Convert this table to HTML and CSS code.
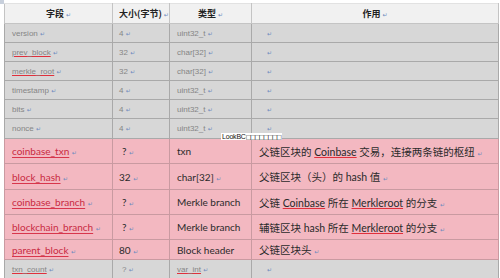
FILE: index.html
```html
<!DOCTYPE html>
<html lang="zh">
<head>
<meta charset="utf-8">
<link rel="stylesheet" href="styles.css">
</head>
<body>
<div class="handle"></div>
<table class="tbl">
  <colgroup>
    <col class="c1"><col class="c2"><col class="c3"><col class="c4">
  </colgroup>
  <thead>
    <tr class="head">
      <th>字段 <span class="pm">↵</span></th>
      <th class="left">大小(字节) <span class="pm">↵</span></th>
      <th>类型 <span class="pm">↵</span></th>
      <th>作用 <span class="pm">↵</span></th>
    </tr>
  </thead>
  <tbody>
    <tr class="gray">
      <td>version <span class="pm">↵</span></td><td>4 <span class="pm">↵</span></td><td>uint32_t <span class="pm">↵</span></td><td class="ind"><span class="pm">↵</span></td>
    </tr>
    <tr class="gray">
      <td><span class="sp">prev_block</span> <span class="pm">↵</span></td><td>32 <span class="pm">↵</span></td><td>char[32] <span class="pm">↵</span></td><td class="ind"><span class="pm">↵</span></td>
    </tr>
    <tr class="gray">
      <td><span class="sp">merkle_root</span> <span class="pm">↵</span></td><td>32 <span class="pm">↵</span></td><td>char[32] <span class="pm">↵</span></td><td class="ind"><span class="pm">↵</span></td>
    </tr>
    <tr class="gray">
      <td>timestamp <span class="pm">↵</span></td><td>4 <span class="pm">↵</span></td><td>uint32_t <span class="pm">↵</span></td><td class="ind"><span class="pm">↵</span></td>
    </tr>
    <tr class="gray">
      <td>bits <span class="pm">↵</span></td><td>4 <span class="pm">↵</span></td><td>uint32_t <span class="pm">↵</span></td><td class="ind"><span class="pm">↵</span></td>
    </tr>
    <tr class="gray tall">
      <td>nonce <span class="pm">↵</span></td><td>4 <span class="pm">↵</span></td><td>uint32_t <span class="pm">↵</span></td><td class="ind"><span class="pm">↵</span></td>
    </tr>
    <tr class="pink">
      <td><span class="lnk">coinbase_txn</span> <span class="pm">↵</span></td><td class="q">? <span class="pm">↵</span></td><td>txn</td><td class="desc">父链区块的 <span class="sp">Coinbase</span> 交易，连接两条链的枢纽 <span class="pm">↵</span></td>
    </tr>
    <tr class="pink taller">
      <td><span class="lnk">block_hash</span> <span class="pm">↵</span></td><td>32 <span class="pm">↵</span></td><td>char[32] <span class="pm">↵</span></td><td class="desc">父链区块（头）的 hash 值 <span class="pm">↵</span></td>
    </tr>
    <tr class="pink">
      <td><span class="lnk">coinbase_branch</span> <span class="pm">↵</span></td><td class="q">? <span class="pm">↵</span></td><td>Merkle branch</td><td class="desc">父链 <span class="sp">Coinbase</span> 所在 <span class="sp">Merkleroot</span> 的分支 <span class="pm">↵</span></td>
    </tr>
    <tr class="pink">
      <td><span class="lnk">blockchain_branch</span> <span class="pm">↵</span></td><td class="q">? <span class="pm">↵</span></td><td>Merkle branch</td><td class="desc">辅链区块 hash 所在 <span class="sp">Merkleroot</span> 的分支 <span class="pm">↵</span></td>
    </tr>
    <tr class="pink short">
      <td><span class="lnk">parent_block</span> <span class="pm">↵</span></td><td>80 <span class="pm">↵</span></td><td>Block header</td><td class="desc">父链区块头 <span class="pm">↵</span></td>
    </tr>
    <tr class="gray">
      <td><span class="sp">txn_count</span> <span class="pm">↵</span></td><td class="q">? <span class="pm">↵</span></td><td><span class="sp">var_int</span> <span class="pm">↵</span></td><td class="ind"><span class="pm">↵</span></td>
    </tr>
  </tbody>
</table>
<div class="overlay">LookBC<span class="tofu">□□□□□□□□</span></div>
</body>
</html>
```
FILE: styles.css
```css
html, body {
  margin: 0;
  padding: 0;
  background: #ffffff;
  overflow: hidden;
}
body {
  padding: 3px 0 0 4px;
  width: 500px;
  height: 278px;
  box-sizing: border-box;
  position: relative;
  font-family: "Liberation Sans", "Noto Sans CJK SC", sans-serif;
}
.handle {
  position: absolute;
  left: 0;
  top: 0;
  width: 4px;
  height: 4px;
  background: #c8d0dc;
}
.tbl {
  border-collapse: collapse;
  table-layout: fixed;
  width: 494px;
}
.c1 { width: 108px; }
.c2 { width: 57px; }
.c3 { width: 82px; }
.c4 { width: 247px; }
.tbl th, .tbl td {
  padding: 0 0 0 7px;
  white-space: nowrap;
  overflow: hidden;
  vertical-align: middle;
  text-align: left;
}
.head th {
  height: 19px;
  background: #f1f1f1;
  border: 1px solid #c4c4c4;
  border-top-color: #e2e2e2;
  font-family: "Noto Sans CJK SC", "Liberation Sans", sans-serif;
  font-weight: bold;
  font-size: 9px;
  color: #222;
  text-align: center;
  padding: 0;
}
.head th.left {
  text-align: left;
  padding-left: 6px;
}
.gray td {
  height: 18px;
  background: #d7d7d7;
  border: 1px solid #a9a9a9;
  font-size: 8px;
  color: #858585;
}
.gray.tall td { height: 19px; }
.gray td:nth-child(2) { padding-left: 6px; }
.gray td.ind { padding-left: 15px; }
.pink td {
  height: 24px;
  background: #f3b8c1;
  border: 1px solid #c99aa1;
  font-family: "Lato", "Noto Sans CJK SC", sans-serif;
  font-size: 10px;
  color: #2a2a2a;
}
.pink.taller td { height: 25px; }
.pink.short td { height: 19px; }
.pink td:nth-child(2) { padding-left: 6px; }
.pink td.q { padding-left: 9px; }
.gray td.q { padding-left: 9px; }
.pink td.desc {
  font-size: 10.5px;
}
.pm {
  color: #6f8bbf;
  font-family: "DejaVu Sans", sans-serif;
  font-size: 6px;
  font-weight: normal;
}
.sp {
  text-decoration: underline;
  text-decoration-color: #e0303c;
  text-underline-offset: 1px;
}
.lnk {
  color: #c92a42;
  text-decoration: underline;
  text-decoration-color: #d8364c;
  text-underline-offset: 2px;
}
.overlay {
  position: absolute;
  left: 221px;
  top: 133px;
  background: #ffffff;
  color: #111;
  font-family: "Liberation Sans", "DejaVu Sans", sans-serif;
  font-size: 7px;
  line-height: 7px;
  padding: 0 1px;
  letter-spacing: -0.2px;
}
.tofu {
  font-family: "DejaVu Sans", sans-serif;
  font-size: 6px;
  letter-spacing: -1.3px;
}
```
